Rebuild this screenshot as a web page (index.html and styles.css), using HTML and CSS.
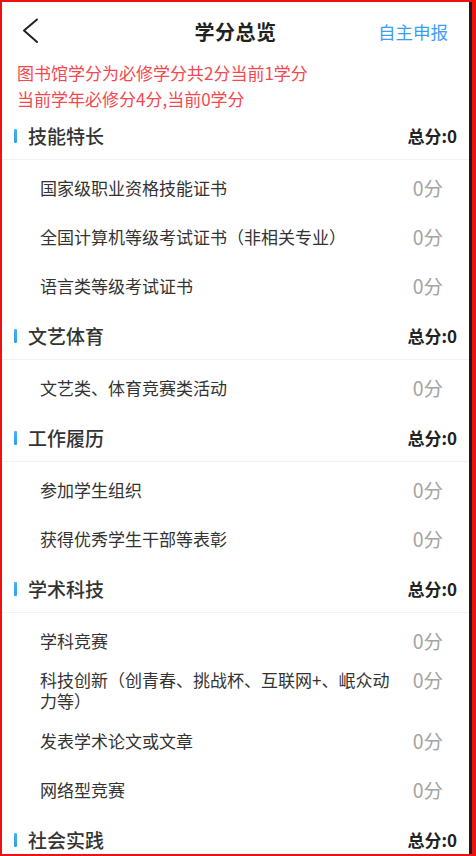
FILE: index.html
```html
<!DOCTYPE html>
<html lang="zh-CN">
<head>
  <meta charset="UTF-8" />
  <title>学分总览</title>
  <meta name="viewport" content="width=device-width, initial-scale=1.0" />
  <link rel="stylesheet" href="styles.css">
</head>
<body>
  <div class="screen">
    <header class="nav">
      <div class="back">
        <svg width="18" height="26" viewBox="0 0 18 26">
          <polyline points="15,1.5 2,12.5 15,24" fill="none" stroke="#222" stroke-width="2" stroke-linecap="round" stroke-linejoin="round" />
        </svg>
      </div>
      <div class="title">学分总览</div>
      <div class="action">自主申报</div>
    </header>

    <div class="notice">
      <div>图书馆学分为必修学分共2分当前1学分</div>
      <div>当前学年必修分4分,当前0学分</div>
    </div>

    <div class="section">
      <div class="sec-head">
        <span class="sec-title">技能特长</span>
        <span class="sec-total">总分:0</span>
      </div>
      <div class="items">
        <div class="item"><span class="label">国家级职业资格技能证书</span><span class="score">0分</span></div>
        <div class="item"><span class="label">全国计算机等级考试证书（非相关专业）</span><span class="score">0分</span></div>
        <div class="item"><span class="label">语言类等级考试证书</span><span class="score">0分</span></div>
      </div>
    </div>

    <div class="section">
      <div class="sec-head">
        <span class="sec-title">文艺体育</span>
        <span class="sec-total">总分:0</span>
      </div>
      <div class="items">
        <div class="item"><span class="label">文艺类、体育竞赛类活动</span><span class="score">0分</span></div>
      </div>
    </div>

    <div class="section">
      <div class="sec-head">
        <span class="sec-title">工作履历</span>
        <span class="sec-total">总分:0</span>
      </div>
      <div class="items">
        <div class="item"><span class="label">参加学生组织</span><span class="score">0分</span></div>
        <div class="item"><span class="label">获得优秀学生干部等表彰</span><span class="score">0分</span></div>
      </div>
    </div>

    <div class="section">
      <div class="sec-head">
        <span class="sec-title">学术科技</span>
        <span class="sec-total">总分:0</span>
      </div>
      <div class="items">
        <div class="item"><span class="label">学科竞赛</span><span class="score">0分</span></div>
        <div class="item multi"><span class="label">科技创新（创青春、挑战杯、互联网+、岷众动力等）</span><span class="score">0分</span></div>
        <div class="item"><span class="label">发表学术论文或文章</span><span class="score">0分</span></div>
        <div class="item"><span class="label">网络型竞赛</span><span class="score">0分</span></div>
      </div>
    </div>

    <div class="section">
      <div class="sec-head">
        <span class="sec-title">社会实践</span>
        <span class="sec-total">总分:0</span>
      </div>
    </div>
  </div>
</body>
</html>
```

FILE: styles.css
```css
html, body {
  margin: 0;
  padding: 0;
}
body {
  background: #f01010;
  font-family: "Noto Sans CJK SC", "Noto Sans", sans-serif;
  color: #333;
}
.screen {
  margin: 2px 4px 2px 2px;
  height: 852px;
  box-sizing: border-box;
  background: #fff;
  border-right: 3px solid #1c1c1c;
  overflow: hidden;
}
.nav {
  height: 58px;
  display: grid;
  grid-template-columns: 1fr auto 1fr;
  align-items: center;
}
.back {
  padding-left: 20px;
  display: flex;
  align-items: center;
}
.back svg {
  display: block;
}
.title {
  font-size: 20px;
  font-weight: 700;
  color: #222;
  letter-spacing: 0.5px;
}
.action {
  justify-self: end;
  padding-right: 21px;
  font-size: 17.5px;
  color: #3d9df2;
}
.notice {
  padding-left: 15px;
  font-size: 17px;
  line-height: 26px;
  color: #f5474f;
}
.sec-head {
  height: 47px;
  border-bottom: 1px solid #f2f2f2;
  display: flex;
  align-items: center;
  justify-content: space-between;
  padding: 0 12px;
}
.sec-title {
  position: relative;
  padding-left: 14px;
  font-size: 19px;
  font-weight: 500;
  color: #333;
}
.sec-title::before {
  content: "";
  position: absolute;
  left: 0;
  top: 50%;
  margin-top: -7px;
  width: 3px;
  height: 14px;
  border-radius: 1px;
  background: linear-gradient(#48b4f8, #2d9ef0);
}
.sec-total {
  font-size: 17px;
  font-weight: 700;
  color: #222;
}
.items {
  padding: 3px 0 2px;
}
.item {
  min-height: 49px;
  box-sizing: border-box;
  padding: 4px 26px 5px 38px;
  display: flex;
  align-items: center;
  justify-content: space-between;
  gap: 16px;
}
.item.multi {
  align-items: flex-start;
}
.label {
  font-size: 17px;
  line-height: 21px;
  color: #333;
}
.score {
  flex: none;
  font-size: 19.5px;
  line-height: 21px;
  color: #a4a4a4;
}
```
